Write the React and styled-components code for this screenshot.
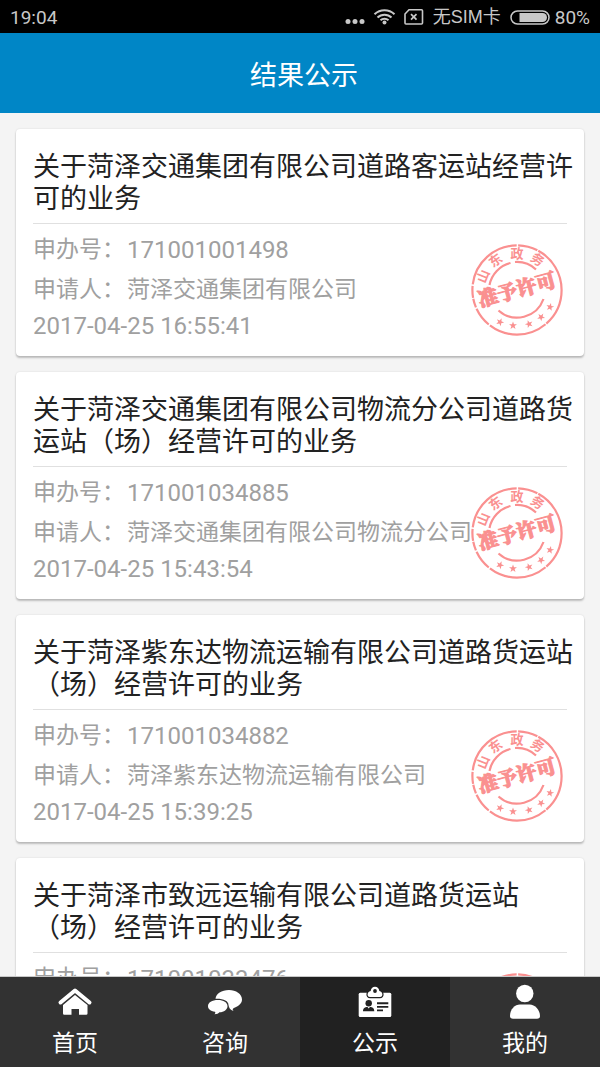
import React from "react";
import styled, { createGlobalStyle, css } from "styled-components";

const GlobalStyle = createGlobalStyle`
  * { box-sizing: border-box; }
  body {
    margin: 0;
    background: #f4f4f4;
    font-family: Roboto, "Noto Sans CJK SC", sans-serif;
  }
`;

const Screen = styled.div`
  display: flex;
  flex-direction: column;
  height: 100vh;
`;

const StatusBar = styled.div`
  flex: none;
  display: flex;
  align-items: center;
  justify-content: space-between;
  height: 33px;
  padding: 2px 10px 0;
  background: #000;
  color: #c8c8c8;
  font-size: 19px;
  line-height: 31px;
`;

const StatusGroup = styled.div`
  display: flex;
  align-items: center;
`;

const Carrier = styled.span`
  margin: 0 9px 0 8px;
  font-size: 18px;
  font-family: "Liberation Sans", "Noto Sans CJK SC", sans-serif;
`;

const Battery = styled.svg`
  margin-right: 5px;
`;

const Header = styled.header`
  flex: none;
  display: flex;
  align-items: center;
  justify-content: center;
  height: 80px;
  padding: 5px 0 0 8px;
  background: #0086c6;
`;

const HeaderTitle = styled.h1`
  margin: 0;
  color: #fff;
  font-size: 27px;
  font-weight: 400;
  line-height: 40px;
`;

const List = styled.main`
  flex: 1;
  min-height: 0;
  display: flex;
  flex-direction: column;
  gap: 16px;
  padding: 16px;
  overflow-y: auto;
  scrollbar-width: none;
`;

const Card = styled.article`
  flex: none;
  position: relative;
  padding: 22px 17px 14px;
  background: #fff;
  border-radius: 4px;
  box-shadow: 0 2px 2px rgba(0, 0, 0, 0.22), 0 0 2px rgba(0, 0, 0, 0.12);
`;

const CardTitle = styled.h2`
  margin: 0 -8px 8px 0;
  color: #222;
  font-size: 27px;
  font-weight: 400;
  line-height: 32px;
`;

const Details = styled.div`
  padding-top: 6px;
  border-top: 1px solid #e0e0e0;
  color: #a0a0a0;
  font-size: 23px;
`;

const Row = styled.p`
  display: flex;
  gap: 2px;
  margin: 0;
  line-height: 40px;
  white-space: nowrap;
`;

const Numeric = styled.span`
  font-size: 24px;
`;

const Time = styled.time`
  display: block;
  font-size: 24px;
  line-height: 32px;
`;

const StampBox = styled.svg`
  position: absolute;
  right: 20px;
  bottom: 19px;
`;

const Nav = styled.nav`
  flex: none;
  display: flex;
  height: 91px;
  border-top: 1px solid #c8c8c8;
`;

const NavItem = styled.button`
  flex: 1;
  display: flex;
  flex-direction: column;
  align-items: center;
  gap: 8px;
  padding: 6px 0 0;
  border: 0;
  background: #323232;
  color: #fff;
  font: inherit;
  font-size: 23px;
  line-height: 34px;
  ${(p) => p.$active && css`background: #212121;`}
`;

const STAR = "M0-4 1-1.2 4-1.2 1.6.6 2.5 3.4 0 1.7-2.5 3.4-1.6.6-4-1.2-1-1.2Z";

const Stamp = () => (
  <StampBox width="94" height="94" viewBox="-47 -47 94 94" role="img" aria-label="准予许可">
    <g fill="none" stroke="#fa9090">
      <circle r="44.600" strokeWidth="2.200" strokeDasharray="38 1 60 1.500 20 1.500 9 1 12 1.500 64 1.500 20 1 48 1" />
      <path d="M-27.500-5A28 28 0 0 1-6.500-27M-2-28A28 28 0 0 1 19-20.500" strokeWidth="2.200" />
      <path d="M-18.500 20.500A28 28 0 0 0 26.500 9" strokeWidth="2.200" />
    </g>
    <g fill="#fa9090" textAnchor="middle" fontFamily='"Noto Sans CJK SC", sans-serif'>
      <g fontSize="13" fontWeight="700">
        <text transform="rotate(-68) translate(0 -32)">山</text>
        <text transform="rotate(-36) translate(0 -32)">东</text>
        <text transform="rotate(0) translate(0 -32)">政</text>
        <text transform="rotate(34) translate(0 -32)">务</text>
      </g>
      <text
        transform="rotate(-15)"
        y="7"
        fontSize="20"
        fontWeight="900"
        stroke="#fa9090"
        strokeWidth="1"
        fontFamily='"Noto Serif CJK SC", "Noto Sans CJK SC", serif'
      >
        准予许可
      </text>
      <path d={STAR} transform="translate(-17 32) rotate(25)" />
      <path d={STAR} transform="translate(-4 35.500)" />
      <path d={STAR} transform="translate(12 34) rotate(-20)" />
      <path d={STAR} transform="translate(24 27) rotate(-40)" />
      <path d={STAR} transform="translate(33 17) rotate(-60)" />
    </g>
  </StampBox>
);

const Signals = () => (
  <svg width="80" height="24" viewBox="0 0 80 24" aria-hidden="true">
    <g fill="#c8c8c8">
      <circle cx="3" cy="15.500" r="2.500" />
      <circle cx="10" cy="15.500" r="2.500" />
      <circle cx="17" cy="15.500" r="2.500" />
      <circle cx="39.500" cy="16.500" r="2" />
    </g>
    <g fill="none" stroke="#c8c8c8" strokeWidth="2">
      <path d="M29.500 8.300A14.500 14.500 0 0 1 49.500 8.300M32.500 11.500A10 10 0 0 1 46.500 11.500M35.500 14.300A5.800 5.800 0 0 1 43.500 14.300" />
      <path d="M64 3.700H76.500Q77.500 3.700 77.500 4.700V17Q77.500 18 76.500 18H61Q60 18 60 17V8Z" strokeWidth="1.600" />
      <path d="M66 8.200 71.500 13.700M71.500 8.200 66 13.700" strokeWidth="1.700" />
    </g>
  </svg>
);

const HomeIcon = () => (
  <svg width="36" height="36" viewBox="0 0 36 36" aria-hidden="true">
    <path d="M3.500 19.500 18 7.500 32.500 19.500" fill="none" stroke="#fff" strokeWidth="4" strokeLinecap="round" strokeLinejoin="round" />
    <path d="M6 22 18 12 30.500 22V30.500Q30.500 31.800 29.200 31.800H22V26H14.500V31.800H7.300Q6 31.800 6 30.500Z" fill="#fff" />
  </svg>
);

const ChatIcon = () => (
  <svg width="36" height="36" viewBox="0 0 36 36" aria-hidden="true">
    <g fill="#fff">
      <path d="M22 7C29 7 35 11 35 16.500 35 20 32.500 22.500 28 24.500 24.500 26 26 27 26.500 28 23 27 22 25 21.500 22 21.500 18 16.500 15.500 8.500 15.800 9 10.500 14.500 7 22 7Z" />
      <path d="M11 17C16.500 17 20.500 19.500 20.500 23.200 20.500 26.500 17 29 12.500 29.300 11.500 30.500 10 31.200 7.500 31.200 8.500 30.500 8.500 29.500 8 28.800 3.500 28 1 26 1 23.200 1 19.500 5 17 11 17Z" />
    </g>
  </svg>
);

const BadgeIcon = () => (
  <svg width="36" height="36" viewBox="0 0 36 36" aria-hidden="true">
    <rect x="1.700" y="9.700" width="32.600" height="24.300" rx="1.500" fill="#fff" />
    <path
      d="M13.700 8A4.300 4.300 0 0 1 22.300 8C26.300 9 26.300 14 23 14H13C9.700 14 9.700 9 13.700 8Z"
      fill="#fff"
      stroke="#212121"
      strokeWidth="2.400"
      paintOrder="stroke"
    />
    <g fill="#212121">
      <circle cx="18" cy="8" r="1.900" />
      <circle cx="11.700" cy="20.300" r="3.200" />
      <path d="M6 28.300C6 25 8 24 10.500 24L11.700 25.500 12.900 24C15.400 24 17.300 25 17.300 28.300Z" />
      <path d="M20 19.300H31.300V21.200H20ZM20 22.900H31.300V24.800H20ZM20 26.500H26V28.200H20Z" />
    </g>
  </svg>
);

const UserIcon = () => (
  <svg width="36" height="36" viewBox="0 0 36 36" aria-hidden="true">
    <circle cx="17.800" cy="10.500" r="8.700" fill="#fff" />
    <path d="M3 33C3 26 8 21.500 13 21.500H22.500C28 21.500 33 27 33 33Q33 35.800 30 35.800H6Q3 35.800 3 33Z" fill="#fff" />
  </svg>
);

const RECORDS = [
  ["关于菏泽交通集团有限公司道路客运站经营许可的业务", "171001001498", "菏泽交通集团有限公司", "2017-04-25 16:55:41"],
  ["关于菏泽交通集团有限公司物流分公司道路货运站（场）经营许可的业务", "171001034885", "菏泽交通集团有限公司物流分公司", "2017-04-25 15:43:54"],
  ["关于菏泽紫东达物流运输有限公司道路货运站（场）经营许可的业务", "171001034882", "菏泽紫东达物流运输有限公司", "2017-04-25 15:39:25"],
  ["关于菏泽市致远运输有限公司道路货运站（场）经营许可的业务", "171001033476", "菏泽市致远运输有限公司", "2017-04-25 15:32:10"],
];

const TABS = [
  ["首页", HomeIcon],
  ["咨询", ChatIcon],
  ["公示", BadgeIcon],
  ["我的", UserIcon],
];

export default function App() {
  return (
    <Screen>
      <GlobalStyle />
      <StatusBar>
        <span>19:04</span>
        <StatusGroup>
          <Signals />
          <Carrier>无SIM卡</Carrier>
          <Battery width="40" height="16" viewBox="0 0 40 16" aria-hidden="true">
            <rect x="1" y="1" width="38" height="13" rx="6.500" fill="none" stroke="#c8c8c8" strokeWidth="1.500" />
            <path d="M9.500 3H32.500A4.500 4.500 0 0 1 32.500 12H9.500Z" fill="#c8c8c8" />
          </Battery>
          <span>80%</span>
        </StatusGroup>
      </StatusBar>
      <Header>
        <HeaderTitle>结果公示</HeaderTitle>
      </Header>
      <List>
        {RECORDS.map(([title, number, applicant, time]) => (
          <Card key={number}>
            <CardTitle>{title}</CardTitle>
            <Details>
              <Row>
                <span>申办号：</span>
                <Numeric>{number}</Numeric>
              </Row>
              <Row>
                <span>申请人：</span>
                <span>{applicant}</span>
              </Row>
              <Time>{time}</Time>
            </Details>
            <Stamp />
          </Card>
        ))}
      </List>
      <Nav>
        {TABS.map(([label, Icon]) => (
          <NavItem key={label} type="button" $active={label === "公示"}>
            <Icon />
            {label}
          </NavItem>
        ))}
      </Nav>
    </Screen>
  );
}
